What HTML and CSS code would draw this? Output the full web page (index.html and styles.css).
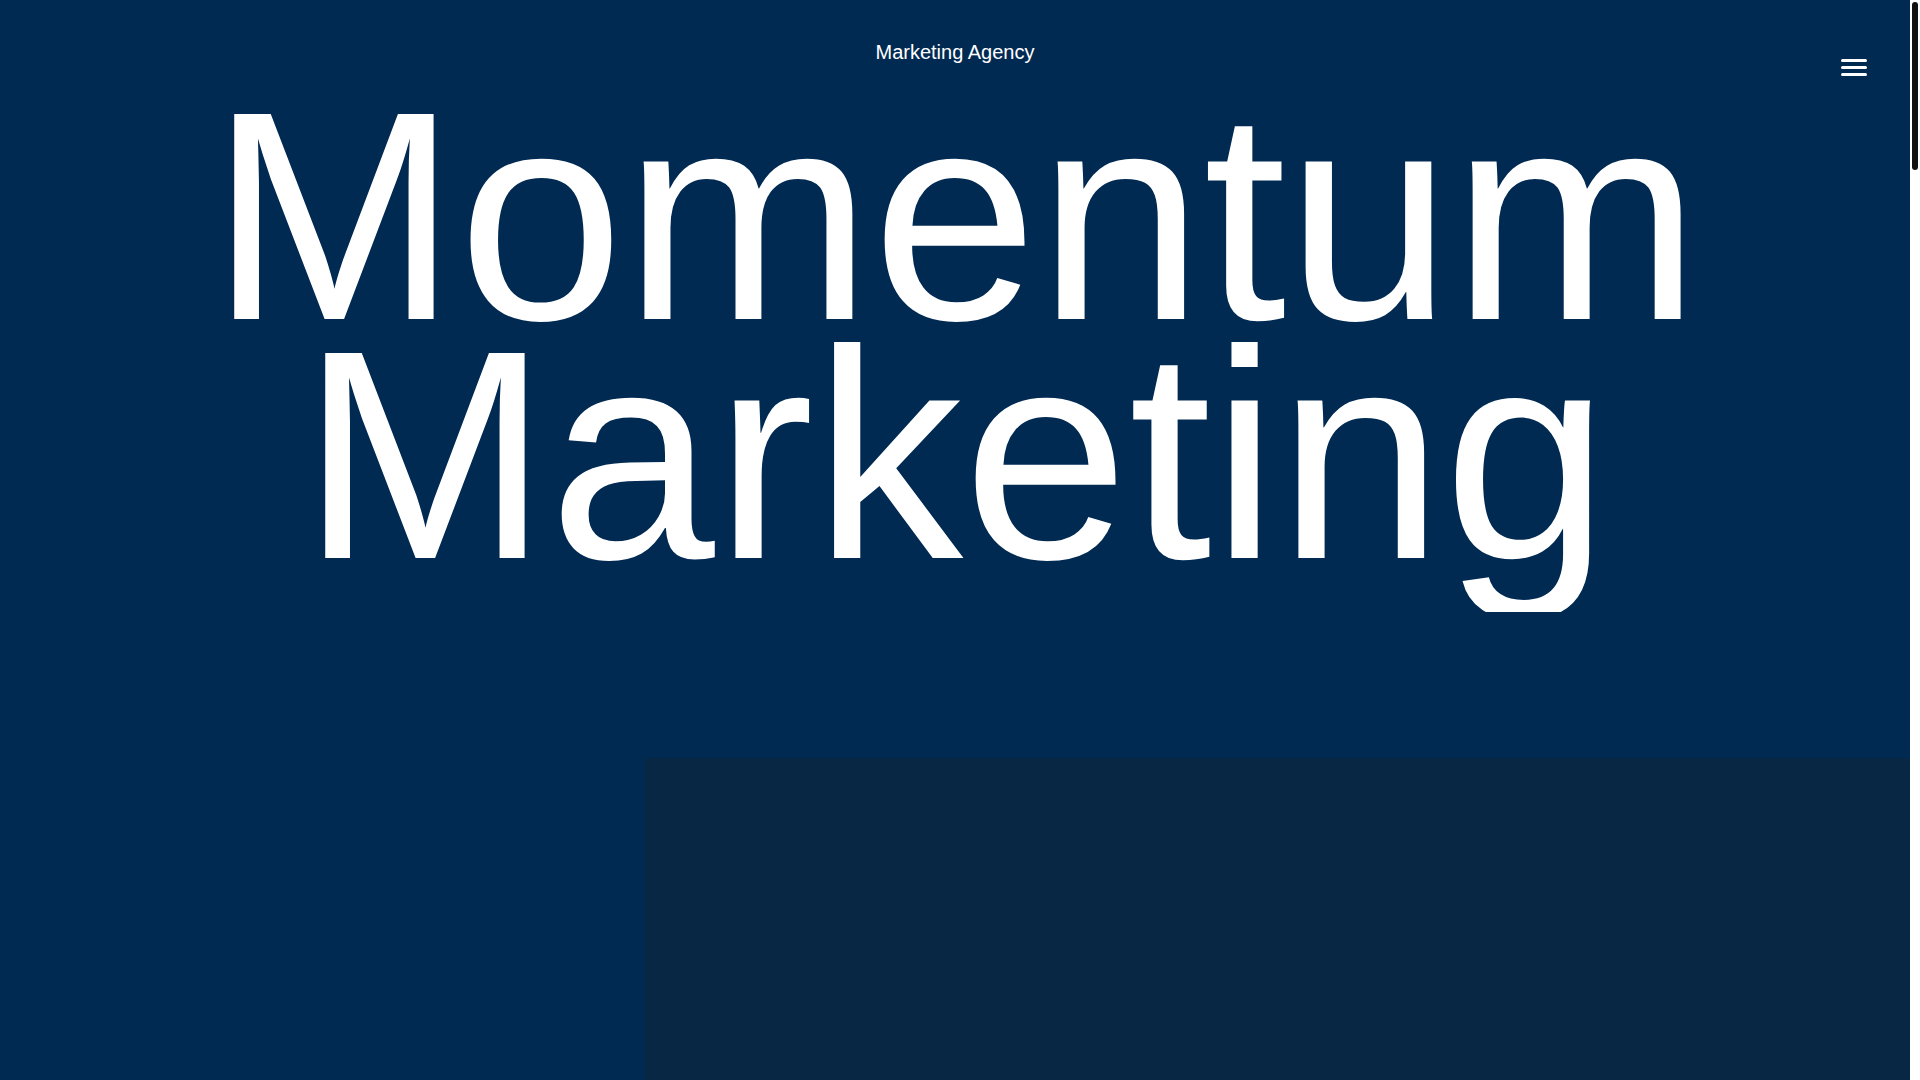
FILE: index.html
```html
<!DOCTYPE html>
<html lang="en">
<head>
<meta charset="utf-8">
<title>Momentum Marketing</title>
<link rel="stylesheet" href="styles.css">
</head>
<body>
<div class="page">
  <header class="site-header">
    <div class="spacer"></div>
    <div class="brand">Marketing Agency</div>
    <button class="menu-btn" aria-label="Menu">
      <span class="bar"></span><span class="bar"></span><span class="bar"></span>
    </button>
  </header>
  <section class="hero">
    <h1 class="hero-title">Momentum Marketing</h1>
  </section>
  <section class="feature">
    <div class="feature-side"></div>
    <div class="feature-panel"></div>
  </section>
  <section class="rest"></section>
</div>
<div class="rail" aria-hidden="true"><div class="thumb"></div></div>
</body>
</html>
```
FILE: styles.css
```css
html {
  background: #012a53;
  scrollbar-width: none;
}
html::-webkit-scrollbar {
  display: none;
}
body {
  margin: 0;
  display: flex;
  align-items: flex-start;
  background: #012a53;
  color: #ffffff;
  font-family: "Liberation Sans", Arial, sans-serif;
}
.page {
  flex: 1;
  min-width: 0;
  background: #012a53;
}
.rail {
  position: sticky;
  top: 0;
  width: 10px;
  height: 100vh;
  flex: none;
  background: #ffffff;
  padding: 2px;
  box-sizing: border-box;
}
.thumb {
  width: 6px;
  height: 168px;
  background: #111111;
  border-radius: 3px;
}
.site-header {
  display: grid;
  grid-template-columns: 1fr auto 1fr;
  align-items: start;
  height: 64px;
}
.brand {
  padding-top: 41px;
  font-size: 20px;
  line-height: 23px;
}
.menu-btn {
  justify-self: end;
  margin: 59px 43px 0 0;
  padding: 0;
  width: 26px;
  height: 17px;
  border: 0;
  background: transparent;
  display: flex;
  flex-direction: column;
  justify-content: space-between;
  cursor: pointer;
}
.bar {
  display: block;
  height: 3px;
  width: 26px;
  background: #ffffff;
  border-radius: 2px;
}
.hero {
  margin-top: 32px;
  height: 516px;
  overflow: hidden;
}
.hero-title {
  margin: 0;
  font-weight: 400;
  font-size: 298px;
  line-height: 239px;
  text-align: center;
  letter-spacing: 0;
}
.feature {
  margin-top: 146px;
  display: grid;
  grid-template-columns: 645px 1fr;
}
.feature-panel {
  background: #072745;
  height: 1100px;
}
.rest {
  height: 4500px;
}
```
